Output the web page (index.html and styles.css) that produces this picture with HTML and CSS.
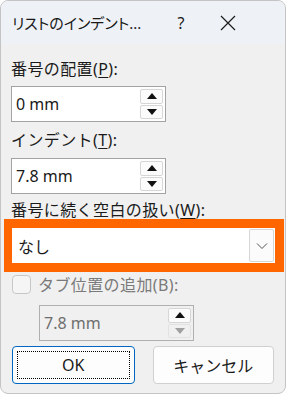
FILE: index.html
```html
<!DOCTYPE html>
<html lang="ja">
<head>
<meta charset="utf-8">
<link rel="stylesheet" href="styles.css">
</head>
<body>
<div class="window">
  <div class="titlebar">
    <span class="title">リストのインデント...</span>
    <span class="help">?</span>
    <span class="close">
      <svg width="16" height="16" viewBox="0 0 16 16"><path d="M1 1L15 15M15 1L1 15" stroke="#1a1a1a" stroke-width="1.2" fill="none"/></svg>
    </span>
  </div>
  <div class="content">
    <div class="label l1">番号の配置(<u>P</u>):</div>
    <div class="spin">
      <span class="val">0 mm</span>
      <span class="btns">
        <span class="sb"><i class="up"></i></span>
        <span class="sb"><i class="down"></i></span>
      </span>
    </div>
    <div class="label l2">インデント(<u>T</u>):</div>
    <div class="spin">
      <span class="val">7.8 mm</span>
      <span class="btns">
        <span class="sb"><i class="up"></i></span>
        <span class="sb"><i class="down"></i></span>
      </span>
    </div>
    <div class="label l3">番号に続く空白の扱い(<u>W</u>):</div>
    <div class="hl">
      <div class="select">
        <span class="val">なし</span>
        <span class="dd">
          <svg width="12" height="8" viewBox="0 0 12 8"><path d="M1 1.5L6 6.5L11 1.5" stroke="#555" stroke-width="1" fill="none"/></svg>
        </span>
      </div>
    </div>
    <div class="check">
      <span class="box"></span>
      <span class="clabel">タブ位置の追加(B):</span>
    </div>
    <div class="spin dis">
      <span class="val">7.8 mm</span>
      <span class="btns">
        <span class="sb"><i class="up"></i></span>
        <span class="sb"><i class="down"></i></span>
      </span>
    </div>
    <div class="buttons">
      <div class="btn ok"><span class="focus">OK</span></div>
      <div class="btn">キャンセル</div>
    </div>
  </div>
</div>
</body>
</html>
```
FILE: styles.css
```css
* { box-sizing: border-box; }
html, body { margin: 0; padding: 0; background: #ffffff; }
body {
  font-family: "Noto Sans", "Noto Sans CJK JP", sans-serif;
  color: #1a1a1a;
  width: 288px;
  height: 398px;
  overflow: hidden;
}
.window {
  width: 286px;
  height: 394px;
  background: #f0f0f0;
  border: 1px solid #c4c4c4;
  border-radius: 8px;
  overflow: hidden;
}
.titlebar {
  height: 43px;
  background: #eef2f7;
  display: flex;
  align-items: center;
  font-size: 15px;
  font-feature-settings: "palt";
}
.title { padding-left: 11px; width: 160px; white-space: nowrap; }
.help { width: 40px; text-align: center; font-size: 16px; }
.close { width: 46px; margin-left: 4px; display: flex; justify-content: center; }
.content { padding: 0 11px 0 10px; }
.label { font-size: 16px; height: 20px; line-height: 20px; white-space: nowrap; letter-spacing: 0.4px; }
.label u { text-underline-offset: 2px; }
.l1 { margin-top: 15px; margin-bottom: 7px; }
.l2 { margin-top: 8px; margin-bottom: 8px; }
.l3 { margin-top: 6px; margin-bottom: 0; height: 19px; }
.spin {
  width: 155px;
  height: 36px;
  background: #fff;
  border: 1px solid #a3a3a3;
  display: flex;
  align-items: center;
  justify-content: space-between;
  padding: 2px 2px 2px 4px;
}
.val { font-size: 16px; }
.btns { display: flex; flex-direction: column; gap: 1px; height: 30px; width: 23px; }
.sb {
  flex: 1;
  background: #fbfbfb;
  border: 1px solid #d6d6d6;
  border-radius: 2px;
  display: flex;
  align-items: center;
  justify-content: center;
}
.up, .down { width: 0; height: 0; border-left: 5px solid transparent; border-right: 5px solid transparent; }
.up { border-bottom: 6px solid #111; }
.down { border-top: 6px solid #111; }
.hl {
  margin-left: -7px;
  width: 280px;
  background: #ff6600;
  padding: 9px 9px 9px 8px;
}
.select {
  height: 35px;
  background: #fff;
  display: flex;
  align-items: center;
  justify-content: space-between;
  padding: 0 1px 0 6px;
}
.select .val { font-size: 16px; }
.dd {
  width: 25px;
  height: 33px;
  background: #fbfbfb;
  border: 1px solid #d6d6d6;
  border-radius: 2px;
  display: flex;
  align-items: center;
  justify-content: center;
}
.check { display: flex; align-items: center; gap: 7px; height: 22px; margin-top: 1px; }
.box {
  width: 19px; height: 19px;
  border: 1px solid #c7c7c7;
  border-radius: 4px;
  background: #f5f5f5;
  margin-left: 1px;
}
.clabel { font-size: 16px; color: #7a7a7a; letter-spacing: 0.4px; }
.spin.dis {
  margin-top: 10px;
  margin-left: 28px;
  background: #f0f0f0;
  border-color: #b0b0b0;
}
.spin.dis .val { color: #6e6e6e; }
.spin.dis .down { border-top-color: #a0a0a0; }
.spin.dis .sb + .sb { background: #f0f0f0; border-color: #e2e2e2; }
.buttons { display: flex; gap: 18px; margin-top: 5px; padding-left: 1px; }
.btn {
  width: 123px;
  height: 38px;
  background: #fdfdfd;
  border: 1px solid #d0d0d0;
  border-radius: 4px;
  display: flex;
  align-items: center;
  justify-content: center;
  font-size: 16px;
}
.btn + .btn { width: 122px; }
.btn.ok { border-color: #0067c0; padding: 4px; }
.focus {
  width: 100%; height: 100%;
  border: 1px dotted #000;
  display: flex; align-items: center; justify-content: center;
}
```
